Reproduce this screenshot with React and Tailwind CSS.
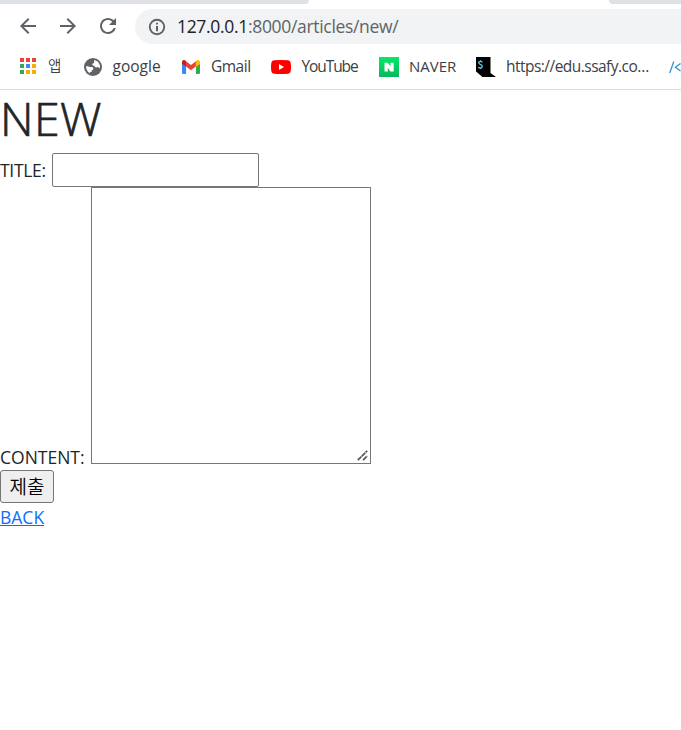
import React from "react";

const ICON = "#5f6368";

function NavIcon({ d, className }) {
  return (
    <svg viewBox="0 0 24 24" fill={ICON} className={`h-6 w-6 shrink-0 ${className}`}>
      <path d={d} />
    </svg>
  );
}

function AppsIcon() {
  const colors = ["#ea4335", "#ea4335", "#ea4335", "#34a853", "#4285f4", "#fbab04", "#34a853", "#fbab04", "#fbab04"];
  return (
    <span className="ml-5 mt-[8px] grid h-4 w-4 shrink-0 grid-cols-3 gap-[2px]">
      {colors.map((c, i) => (
        <span key={i} style={{ backgroundColor: c }} />
      ))}
    </span>
  );
}

function GlobeIcon() {
  return (
    <svg viewBox="0 0 18 18" className="ml-[22px] mt-[8px] h-[18px] w-[18px] shrink-0">
      <circle cx="9" cy="9" r="9" fill={ICON} />
      <path
        fill="#fff"
        d="M2 8.3 Q4.5 7.8 5.6 9 H8 Q9.6 9.6 9.4 11 Q9.2 12 7.8 12.2 V13.4 Q7 14.2 5.8 14.2 V15.3 Q2 13 2 8.3Z M10.2 2.1 Q14.6 3 16 7.6 V9.5 Q15.6 11 14.7 9.6 Q13.8 8.4 12.4 9.6 Q10.6 9.2 10.3 7.8 Q8.3 7.6 8.2 6.4 Q8.4 5 10 4.9Z"
      />
    </svg>
  );
}

function GmailIcon() {
  return (
    <svg viewBox="0 0 18 14" className="ml-[22px] mt-[10px] h-[14px] w-[18px] shrink-0">
      <path fill="#4285f4" d="M0 3.5 4.1 6.5V14H1.3Q0 14 0 12.7Z" />
      <path fill="#34a853" d="M18 3.5 13.9 6.5V14H16.7Q18 14 18 12.7Z" />
      <path fill="#ea4335" d="M4.1 1.2 9 4.9 13.9 1.2V6.6L9 10.2 4.1 6.6Z" />
      <path fill="#c5221f" d="M0 4V2.1C0 .2 2-.7 3.3.5L4.1 1.2V6.8Z" />
      <path fill="#fbbc04" d="M18 4V2.1C18 .2 16-.7 14.7.5L13.9 1.2V6.8Z" />
    </svg>
  );
}

function YouTubeIcon() {
  return (
    <svg viewBox="0 0 20 14" className="ml-[21px] mt-[10px] h-[14px] w-5 shrink-0">
      <path fill="#f00" d="M3 .3Q10-.3 17 .3 19.5.4 19.7 3 20.3 7 19.7 11 19.5 13.6 17 13.7 10 14.3 3 13.7.5 13.6.3 11-.3 7 .3 3 .5.4 3 .3Z" />
      <path fill="#fff" d="M8 4.1 13 7 8 9.9Z" />
    </svg>
  );
}

function NaverIcon() {
  return (
    <span className="ml-[21px] mt-[7px] h-5 w-5 shrink-0 bg-gradient-to-b from-[#03ea68] to-[#08b75c]">
      <svg viewBox="0 0 20 20" className="h-5 w-5">
        <path fill="#fff" d="M5.5 5.8H8.8L11.5 9.6V5.8H14.7V14.6H11.5L8.7 10.8V14.6H5.5Z" />
      </svg>
    </span>
  );
}

function SsafyIcon() {
  return (
    <svg viewBox="0 0 20 20" className="ml-5 mt-[7px] h-5 w-5 shrink-0">
      <path fill="#000" d="M0 0H14.5V16L20 20H6.5L0 14.5Z" />
      <path
        fill="none"
        stroke="#65c9ee"
        strokeWidth="1.3"
        d="M6.4 5.1Q4.5 3.8 3 4.9 2.2 6.5 4.3 7.4 7 8.4 6 10.2 4.6 11.6 2.2 10.4M4.5 3.2V4.4M4.5 10.8V12"
      />
    </svg>
  );
}

function Label({ className, children }) {
  return (
    <span className={`shrink-0 whitespace-nowrap leading-[22px] text-[#3c4043] ${className}`}>
      {children}
    </span>
  );
}

export default function App() {
  return (
    <div className="h-[730px] w-[681px] overflow-hidden bg-white font-['Open_Sans','Noto_Sans_CJK_KR',sans-serif] font-[380] text-[#212529]">
      <div className="flex h-1 justify-between">
        <div className="w-[309px] rounded-br-[8px] bg-[#dee1e6]" />
        <div className="w-[72px] rounded-bl-[8px] bg-[#dee1e6]" />
      </div>

      <div className="flex h-[46px] pt-[5px]">
        <NavIcon className="ml-[15.5px] mt-[5px]" d="M20 11H7.83l5.59-5.59L12 4l-8 8 8 8 1.41-1.41L7.83 13H20v-2z" />
        <NavIcon className="ml-4 mt-[5px]" d="M12 4l-1.41 1.41L16.17 11H4v2h12.17l-5.58 5.59L12 20l8-8z" />
        <NavIcon
          className="ml-4 mt-[5px]"
          d="M17.65 6.35C16.2 4.9 14.21 4 12 4c-4.42 0-7.99 3.58-7.99 8s3.57 8 7.99 8c3.73 0 6.84-2.55 7.73-6h-2.08c-.82 2.33-3.04 4-5.65 4-3.31 0-6-2.69-6-6s2.69-6 6-6c1.66 0 3.14.69 4.22 1.78L13 11h7V4l-2.35 2.35z"
        />
        <div className="ml-[15.5px] flex h-[35px] flex-1 rounded-l-full bg-[#f1f3f4]">
          <svg viewBox="0 0 18 18" className="ml-[13px] mt-[9px] h-[18px] w-[18px] shrink-0">
            <circle cx="9" cy="9" r="7.2" fill="none" stroke={ICON} strokeWidth="1.9" />
            <path fill={ICON} d="M8 4.7H10V6.6H8ZM8 7.9H10V13.2H8Z" />
          </svg>
          <span className="ml-[11px] whitespace-nowrap text-[17.5px] leading-[35px] tracking-[-0.32px] text-[#5f6368]">
            <span className="text-[#202124]">127.0.0.1</span>:8000/articles/new/
          </span>
        </div>
      </div>

      <div className="flex h-10 overflow-hidden border-b border-[#dadce0]">
        <AppsIcon />
        <Label className="ml-3 mt-[5px] w-[14px] text-[14.5px] font-[350]">앱</Label>
        <GlobeIcon />
        <Label className="ml-[10.5px] mt-[5px] w-[47.5px] text-[15.5px]">google</Label>
        <GmailIcon />
        <Label className="ml-[11px] mt-[5px] w-[39px] text-[15.5px] tracking-[-0.5px]">Gmail</Label>
        <YouTubeIcon />
        <Label className="ml-[10.5px] mt-[5px] w-[56.5px] text-[15.5px] tracking-[-1.1px]">YouTube</Label>
        <NaverIcon />
        <Label className="ml-[10px] mt-[5px] w-[47px] text-[15px]">NAVER</Label>
        <SsafyIcon />
        <Label className="ml-[10px] mt-[5px] w-[143px] text-[15.5px] tracking-[-0.53px]">https://edu.ssafy.co…</Label>
        <svg viewBox="0 0 12 16" className="ml-5 mt-[9px] h-4 w-3 shrink-0" fill="none" stroke="#2c93d1" strokeWidth="1.3">
          <path d="M.7 14 4.8 2.5M11.5 4.5 6.4 8.2 11.5 12" />
        </svg>
      </div>

      <main className="text-[17.5px] leading-[26px]">
        <h1 className="h-[63px] text-[46.5px] font-light leading-[56px] tracking-[0.4px] [-webkit-text-stroke:0.7px_#212529]">NEW</h1>
        <div className="flex h-[34px]">
          <label htmlFor="title" className="w-[52px] whitespace-nowrap leading-[35px] tracking-[-0.3px]">TITLE:</label>
          <input id="title" className="h-[34px] w-[207px] rounded-[2px] border border-[#767676] bg-white outline-none" />
        </div>
        <div className="flex h-[283px]">
          <label htmlFor="content" className="mt-[257px] w-[91px] whitespace-nowrap">CONTENT:</label>
          <div className="flex h-[277px] w-[280px] items-end justify-end border border-[#767676] pb-[2px] pr-[2px]">
            <svg viewBox="0 0 11 11" className="h-[11px] w-[11px]" stroke="#555" strokeWidth="1.7">
              <path d="M.8 10.2 10.2.8M6 10.2 10.2 6" strokeDasharray="5 .5" />
            </svg>
          </div>
        </div>
        <button className="flex h-[33px] w-[54px] items-center justify-center whitespace-nowrap rounded-[3px] border border-[#767676] bg-[#efefef] text-[19px] font-[350] text-black">
          제출
        </button>
        <a className="mt-px block w-[44px] whitespace-nowrap text-[#0d6efd] underline" href="#">BACK</a>
      </main>
    </div>
  );
}
